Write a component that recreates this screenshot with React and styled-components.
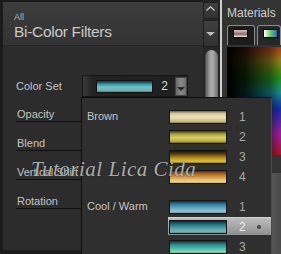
import React from 'react';
import styled, { createGlobalStyle } from 'styled-components';

const GlobalStyle = createGlobalStyle`
  html, body {
    margin: 0;
    padding: 0;
    background: #1b1b1b;
  }
  * { box-sizing: border-box; }
`;

const swatches = {
  brown1: 'linear-gradient(#6e6240 0%, #d8cc9c 22%, #ece2b8 50%, #cbbd8c 85%, #8f845c 100%)',
  brown2: 'linear-gradient(#3f3c0a 0%, #a8a035 25%, #d6cf6a 55%, #b8b040 85%, #6c6618 100%)',
  brown3: 'linear-gradient(#1c1204 0%, #5a4008 25%, #b89420 60%, #d6c040 85%, #9a8420 100%)',
  brown4: 'linear-gradient(#5a3208 0%, #b06820 25%, #d8a050 55%, #ecd68c 85%, #c8b070 100%)',
  cool1: 'linear-gradient(#0c2a3c 0%, #2c7898 25%, #5aa4bc 55%, #98c4cc 85%, #7a9ca4 100%)',
  cool2: 'linear-gradient(#082430 0%, #1e6a7c 25%, #4a98a4 55%, #7cb4b4 85%, #5e8e8e 100%)',
  cool3: 'linear-gradient(#0e3038 0%, #2a8a8c 30%, #4cb8a4 60%, #8cd4b4 90%, #6aa890 100%)',
};

const groups = [
  { name: 'Brown', items: [['brown1', 1], ['brown2', 2], ['brown3', 3], ['brown4', 4]] },
  { name: 'Cool / Warm', items: [['cool1', 1], ['cool2', 2, true], ['cool3', 3]] },
];

const params = ['Opacity', 'Blend', 'Vertical Shift', 'Rotation'];

const App = () => (
  <Screen>
    <GlobalStyle />
    <LeftPanel>
      <Header>
        <Crumb>All</Crumb>
        <Title>Bi-Color Filters</Title>
      </Header>
      <Body>
        <ColorSetRow>
          <Label>Color Set</Label>
          <Picker>
            <PickerSwatch />
            <PickerValue>2</PickerValue>
            <PickerButton>
              <svg width="8" height="4" viewBox="0 0 8 4">
                <path d="M0 0h8L4 4z" fill="#2a2a2a" />
              </svg>
            </PickerButton>
          </Picker>
        </ColorSetRow>
        <ParamList>
          {params.map((p) => (
            <ParamRow key={p}>
              <Label>{p}</Label>
            </ParamRow>
          ))}
        </ParamList>
      </Body>
    </LeftPanel>

    <Scrollbar>
      <ScrollButton $h={17} $align="flex-start">
        <svg width="9" height="5" viewBox="0 0 9 5">
          <path d="M0.5 4.5L4.5 0.8L8.5 4.5" stroke="#cfcfcf" strokeWidth="1.2" fill="none" />
        </svg>
      </ScrollButton>
      <ScrollButton $h={27}>
        <svg width="9" height="4" viewBox="0 0 9 4">
          <path d="M0 0h9L4.5 4z" fill="#bdbdbd" />
        </svg>
      </ScrollButton>
      <Track>
        <Thumb />
      </Track>
    </Scrollbar>
    <Divider />

    <Materials>
      <MatTitle>Materials</MatTitle>
      <Tabs>
        <Tab $active>
          <TabIcon $fill="linear-gradient(#d8c8c8, #8a6a6a 60%, #eee)" />
        </Tab>
        <Tab>
          <TabIcon $fill="linear-gradient(90deg, #fff, #6c6 50%, #36c)" />
        </Tab>
      </Tabs>
      <Spectrum />
      <MatFooter />
    </Materials>

    <Popup>
      {groups.map((g) => (
        <Group key={g.name}>
          {g.items.map(([key, num, sel], i) => (
            <PopRow key={key}>
              <PopLabel>{i === 0 ? g.name : ''}</PopLabel>
              <PopCell $selected={sel}>
                <Swatch style={{ background: swatches[key] }} />
                <PopNum $selected={sel}>{num}</PopNum>
                {sel && <Dot />}
              </PopCell>
            </PopRow>
          ))}
        </Group>
      ))}
    </Popup>

    <Watermark>Tutorial Lica Cida</Watermark>
  </Screen>
);

export default App;

const Screen = styled.div`
  position: relative;
  width: 281px;
  height: 254px;
  overflow: hidden;
  display: flex;
  align-items: flex-start;
  padding: 2px 0 0 3px;
  background: #1b1b1b;
  font-family: 'Liberation Sans', Arial, sans-serif;
`;

const LeftPanel = styled.div`
  width: 205px;
  height: 248px;
  background: #2c2c2c;
  display: flex;
  flex-direction: column;
`;

const Header = styled.div`
  height: 44px;
  padding: 10px 0 0 11px;
  background: linear-gradient(#3c3c3c, #333333);
  border-bottom: 1px solid #262626;
`;

const Crumb = styled.div`
  font-size: 9px;
  line-height: 10px;
  color: #b8b8b8;
`;

const Title = styled.div`
  margin-top: 1px;
  font-size: 15.5px;
  line-height: 18px;
  color: #c9c9c9;
  letter-spacing: -0.3px;
`;

const Body = styled.div`
  padding: 29px 0 0 13px;
`;

const ColorSetRow = styled.div`
  height: 22px;
  display: flex;
  align-items: center;
`;

const Label = styled.span`
  font-size: 11px;
  line-height: 13px;
  color: #c4c4c4;
  white-space: nowrap;
`;

const Picker = styled.div`
  margin-left: 20px;
  width: 106px;
  height: 22px;
  display: flex;
  align-items: center;
  padding-left: 13px;
  background: linear-gradient(90deg, #3a3a3a 0px, #222 10px, #1f1f1f);
  border: 1px solid #161616;
`;

const PickerSwatch = styled.div`
  width: 58px;
  height: 13px;
  border: 1px solid #111;
  background: linear-gradient(#0a2c38 0%, #3c98a8 30%, #6cc0c8 55%, #7ab0ae 85%, #557f7f 100%);
`;

const PickerValue = styled.span`
  margin-left: 8px;
  width: 14px;
  font-size: 12px;
  color: #dcdcdc;
`;

const PickerButton = styled.div`
  width: 12px;
  height: 19px;
  margin-top: 1px;
  display: flex;
  align-items: flex-end;
  justify-content: center;
  padding-bottom: 4px;
  background: linear-gradient(90deg, #6a6a6a, #8a8a8a 50%, #6c6c6c);
  border: 1px solid #444;
`;

const ParamList = styled.div`
  margin-top: -4px;
  width: 150px;
`;

const ParamRow = styled.div`
  height: 29px;
  display: flex;
  align-items: flex-end;
  padding-left: 1px;
  border-bottom: 1px solid #0e0e0e;
`;

const Scrollbar = styled.div`
  width: 17px;
  height: 252px;
  margin-top: -2px;
  display: flex;
  flex-direction: column;
  background: #262626;
  padding-top: 2px;
`;

const ScrollButton = styled.div`
  height: ${(p) => p.$h}px;
  display: flex;
  align-items: ${(p) => p.$align || 'center'};
  justify-content: center;
  padding-top: ${(p) => (p.$align ? 3 : 0)}px;
  background: linear-gradient(#3e3e3e, #333);
  border: 1px solid #1e1e1e;
  margin-bottom: 1px;
`;

const Track = styled.div`
  flex: 1;
  padding: 2px 1px 0 2px;
`;

const Thumb = styled.div`
  height: 120px;
  border-radius: 7px 7px 0 0;
  background: linear-gradient(90deg, #4a4a4a, #9c9c9c 35%, #b0b0b0 55%, #6a6a6a);
`;

const Divider = styled.div`
  width: 3px;
  height: 254px;
  margin-top: -2px;
  border-left: 1px solid #222;
  background: #cfcfcf;
`;

const Materials = styled.div`
  flex: 1;
  height: 254px;
  margin-top: -2px;
  padding: 7px 0 0 5px;
  background: #333;
  display: flex;
  flex-direction: column;
`;

const MatTitle = styled.div`
  font-size: 12px;
  line-height: 13px;
  color: #cfcfcf;
  white-space: nowrap;
`;

const Tabs = styled.div`
  margin-top: 5px;
  display: flex;
  gap: 2px;
  height: 20px;
`;

const Tab = styled.div`
  width: ${(p) => (p.$active ? 28 : 24)}px;
  flex-shrink: 0;
  border: 1px solid #8c8c8c;
  border-bottom: none;
  border-radius: 3px 3px 0 0;
  background: ${(p) => (p.$active ? '#1c1c1c' : '#262626')};
  padding: 3px 0 0 5px;
`;

const TabIcon = styled.div`
  width: 15px;
  height: 9px;
  border: 1px solid #0c0c0c;
  background: ${(p) => p.$fill};
`;

const Spectrum = styled.div`
  margin-top: 2px;
  height: 108px;
  background:
    linear-gradient(90deg, #000 0%, rgba(0, 0, 0, 0.85) 35%, rgba(0, 0, 0, 0.45) 80%, rgba(0, 0, 0, 0.1) 100%),
    linear-gradient(#c0401a 0%, #a8901a 12%, #28a018 28%, #18a0a0 42%, #1830c0 57%, #b020b0 80%, #c01828 100%);
`;

const MatFooter = styled.div`
  flex: 1;
  margin-top: 18px;
  margin-left: 39px;
  background: linear-gradient(90deg, #3a3a3a, #555 40%, #4a4a4a);
`;

const Popup = styled.div`
  position: absolute;
  left: 81px;
  top: 97px;
  width: 191px;
  height: 170px;
  padding-top: 9px;
  background: #2f2f2f;
  border: 1px solid #0d0d0d;
  border-right-color: #4a4a4a;
  display: flex;
  flex-direction: column;
  gap: 12px;
`;

const Group = styled.div`
  display: flex;
  flex-direction: column;
  gap: 2px;
`;

const PopRow = styled.div`
  height: 18px;
  display: grid;
  grid-template-columns: 86px 1fr;
  align-items: stretch;
`;

const PopLabel = styled.span`
  padding-left: 5px;
  align-self: center;
  font-size: 11px;
  line-height: 13px;
  color: #c4c4c4;
  white-space: nowrap;
`;

const PopCell = styled.div`
  display: flex;
  align-items: center;
  padding-left: 1px;
  background: ${(p) => (p.$selected ? 'linear-gradient(#bdbdbd, #8f8f8f)' : 'transparent')};
  border-top: 1px solid ${(p) => (p.$selected ? '#d0d0d0' : 'transparent')};
`;

const Swatch = styled.div`
  width: 58px;
  height: 14px;
  border: 1px solid #151515;
`;

const PopNum = styled.span`
  margin-left: 12px;
  width: 8px;
  font-size: 12px;
  color: ${(p) => (p.$selected ? '#efefef' : '#a8a8a8')};
`;

const Dot = styled.span`
  margin-left: 10px;
  width: 4px;
  height: 4px;
  border-radius: 50%;
  background: #4a4a4a;
`;

const Watermark = styled.div`
  position: absolute;
  left: 31px;
  top: 157px;
  font-family: 'Liberation Serif', 'Times New Roman', serif;
  font-style: italic;
  font-size: 21px;
  letter-spacing: 0.5px;
  color: rgba(215, 215, 215, 0.8);
  text-shadow: 0 0 1px #111;
  white-space: nowrap;
  pointer-events: none;
`;
